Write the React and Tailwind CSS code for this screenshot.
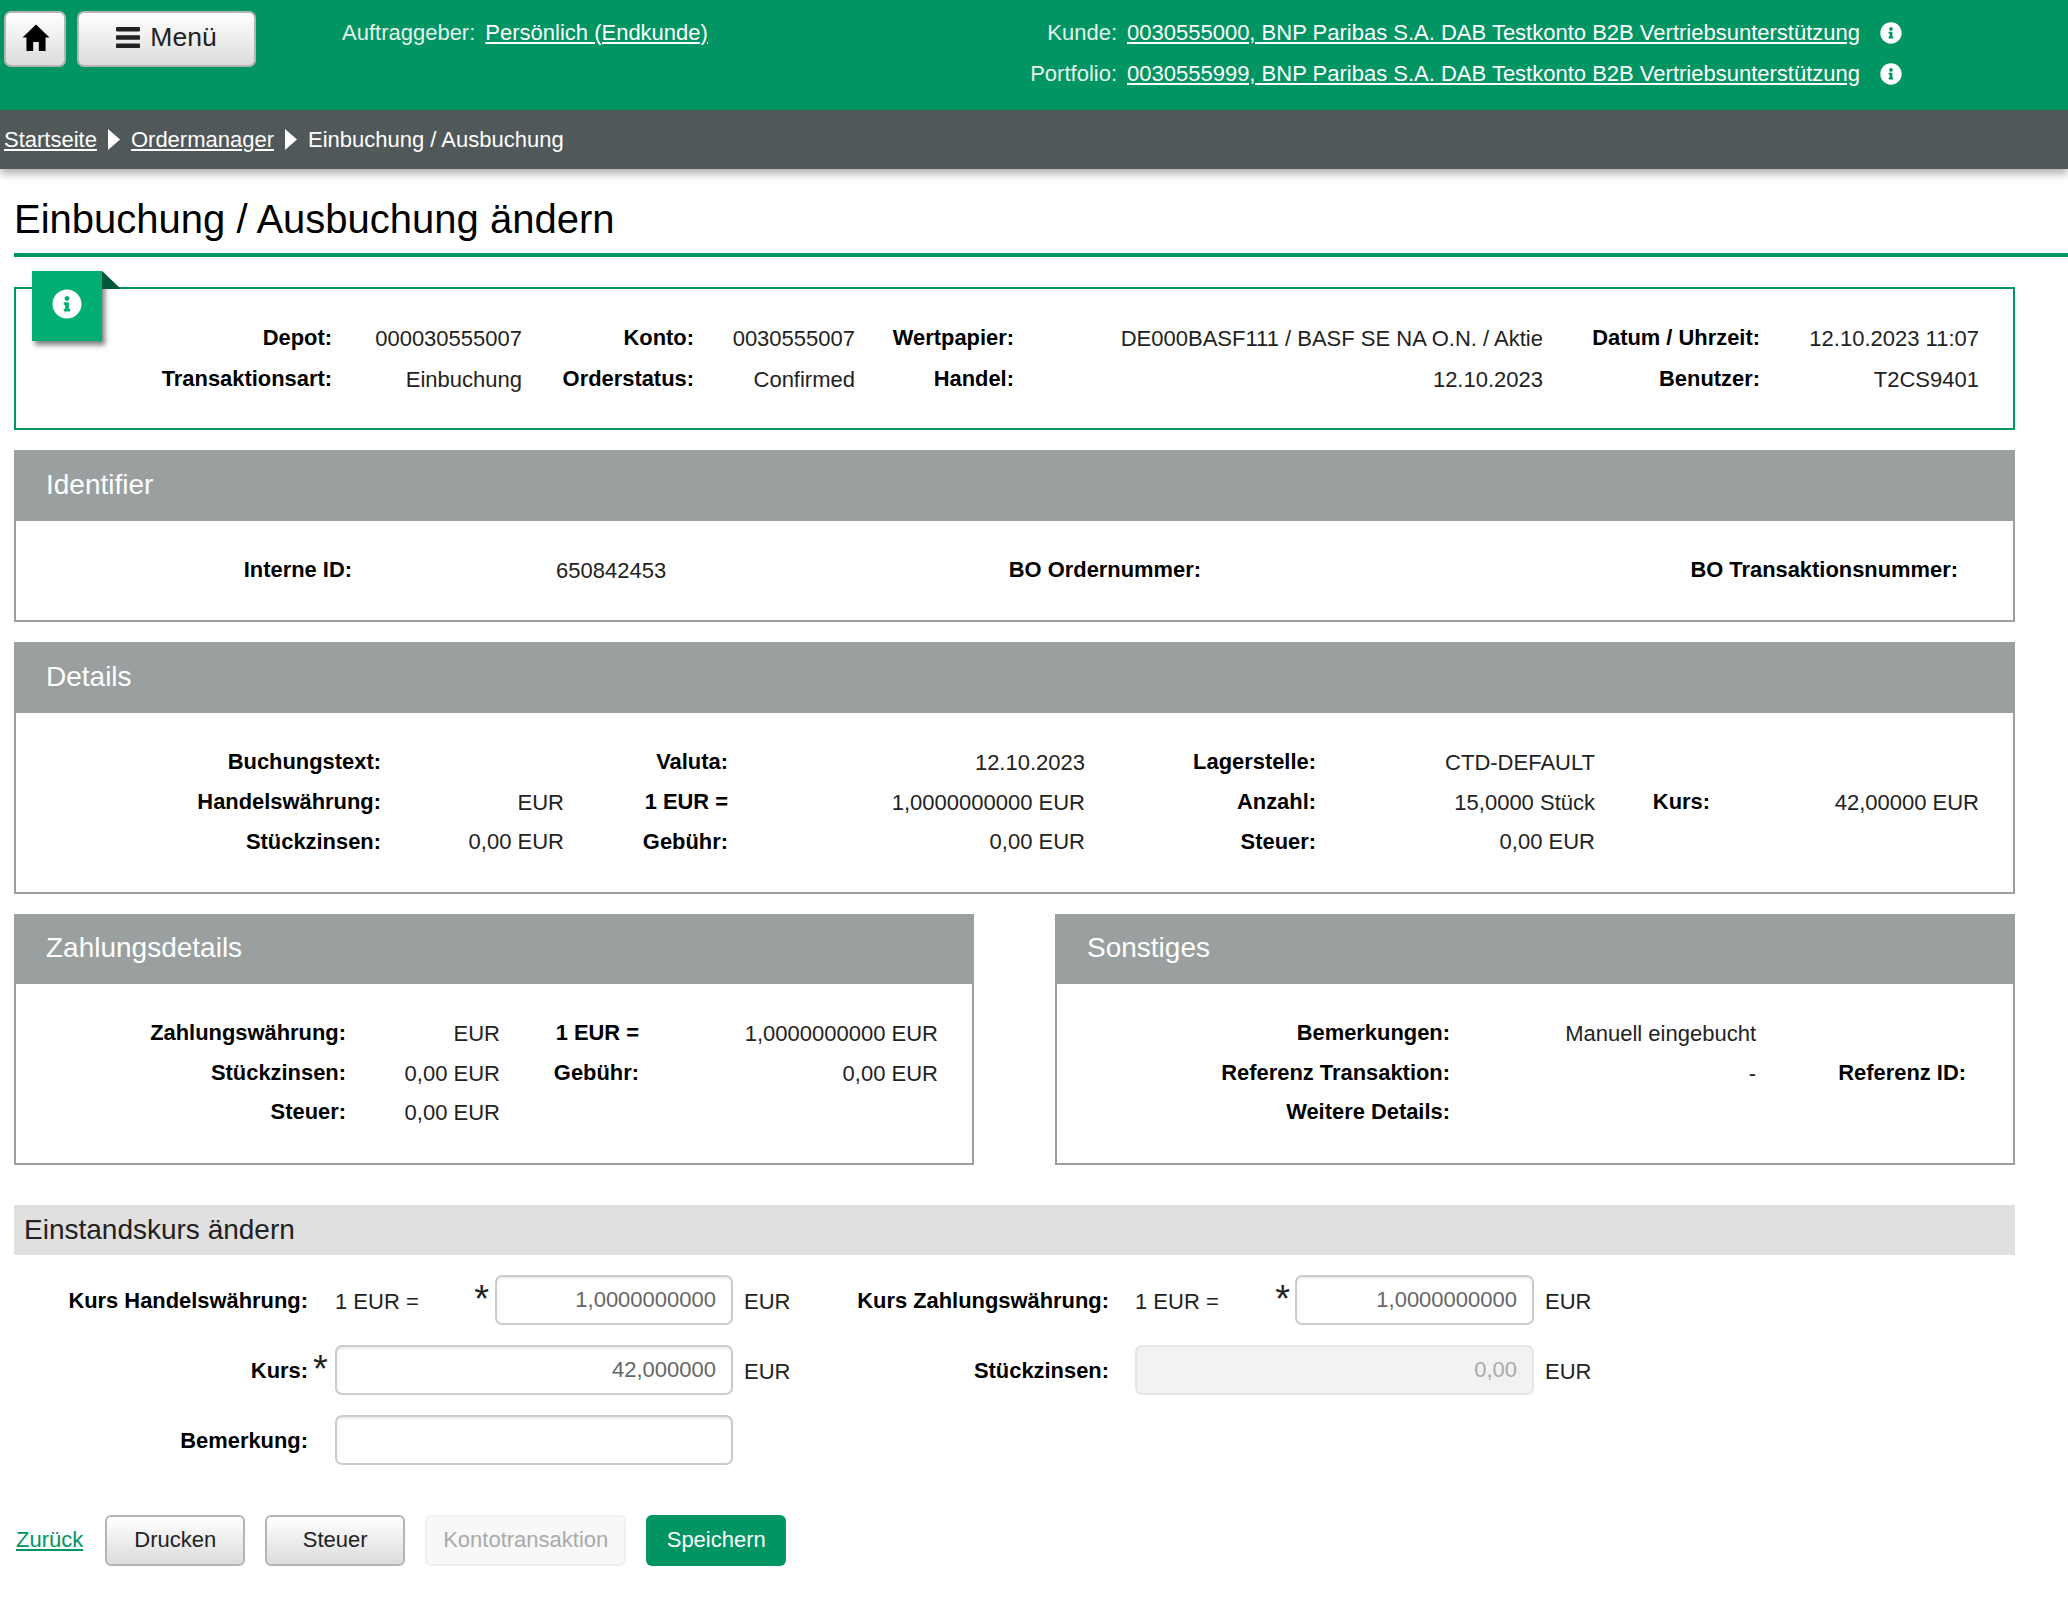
import { FaInfoCircle } from 'react-icons/fa'

const L = ({ children, className = '' }) => (
  <div className={`text-right text-[21.9px] font-bold text-black ${className}`}>{children}</div>
)
const V = ({ children, className = '' }) => (
  <div className={`text-right text-[#222] ${className}`}>{children}</div>
)

function Panel({ title, children, gridClass, headClass = 'h-[70px]' }) {
  return (
    <section className="border-2 border-[#9aa09f] bg-white">
      <h2 className={`flex -mt-px items-center bg-[#9aa09f] px-[30px] pb-[2px] text-[28px] font-normal text-white ${headClass}`}>{title}</h2>
      <div className={`grid items-center ${gridClass}`}>{children}</div>
    </section>
  )
}

function HomeIcon() {
  return (
    <svg width="28" height="27" viewBox="0 0 24 24" fill="currentColor" aria-hidden="true">
      <path d="M12 0.5L24 12H20.5V24H14.5V16H9.5V24H3.5V12H0Z" />
    </svg>
  )
}

function BarsIcon() {
  return (
    <svg width="24" height="21" viewBox="0 0 24 21" fill="currentColor" aria-hidden="true">
      <rect x="0" y="0" width="24" height="4.4" rx="0.8" />
      <rect x="0" y="8.3" width="24" height="4.4" rx="0.8" />
      <rect x="0" y="16.6" width="24" height="4.4" rx="0.8" />
    </svg>
  )
}

function Caret() {
  return (
    <svg width="12" height="21" viewBox="0 0 12 20" fill="#fff" preserveAspectRatio="none" className="mx-[11px] shrink-0" aria-hidden="true">
      <path d="M0 0L12 10L0 20Z" />
    </svg>
  )
}

function Input({ value, disabled, className = '' }) {
  return (
    <div
      className={`flex h-[50px] items-center justify-end rounded-[7px] border-2 px-[15px] ${
        disabled
          ? 'border-[#e6e6e6] bg-[#f2f2f2] text-[#aaa]'
          : 'border-[#cccccc] bg-white text-[#666] shadow-[inset_0_2px_2px_rgba(0,0,0,0.08)]'
      } ${className}`}
    >
      {value}
    </div>
  )
}

const Star = () => <span className="self-start pt-[5px] text-[38px] leading-none text-[#222]">*</span>

function GrayButton({ children, className = '' }) {
  return (
    <button className={`flex h-[51px] items-center justify-center rounded-[6px] border-2 border-[#b5b5b5] bg-gradient-to-b from-white to-[#dcdcdc] pb-[1px] text-[#222] ${className}`}>
      {children}
    </button>
  )
}

export default function App() {
  return (
    <div className="min-h-[1614px] bg-white font-['Liberation_Sans',Arial,sans-serif] text-[22px] text-black">
      <header className="flex h-[110px] items-start justify-between bg-[#009563]">
        <div className="flex items-start">
          <div className="flex w-[342px] gap-[11px] pl-[4px] pt-[11px]">
            <button className="flex h-[56px] w-[62px] items-center justify-center rounded-[7px] border-2 border-[#b5b5b5] bg-gradient-to-b from-white to-[#dcdcdc] pb-[4px] pl-[2px] text-black">
              <HomeIcon />
            </button>
            <button className="flex h-[56px] w-[179px] items-center justify-center gap-[10px] rounded-[7px] border-2 border-[#b5b5b5] bg-gradient-to-b from-white to-[#dcdcdc] pb-[3px] text-[26.5px] text-[#222]">
              <BarsIcon />
              Menü
            </button>
          </div>
          <div className="flex h-[40px] items-center gap-[10px] pt-[24px] text-white">
            <span className="text-[#e4f3ec]">Auftraggeber:</span>
            <a href="#" className="underline">Persönlich (Endkunde)</a>
          </div>
        </div>
        <div className="mr-[166px] grid grid-cols-[auto_auto_32px] items-center gap-x-[10px] pt-[12px] text-white">
          <span className="h-[41px] text-right leading-[41px] text-[#e4f3ec]">Kunde:</span>
          <a href="#" className="underline">0030555000, BNP Paribas S.A. DAB Testkonto B2B Vertriebsunterstützung</a>
          <FaInfoCircle className="ml-[10px] text-[22px]" />
          <span className="h-[41px] text-right leading-[41px] text-[#e4f3ec]">Portfolio:</span>
          <a href="#" className="underline">0030555999, BNP Paribas S.A. DAB Testkonto B2B Vertriebsunterstützung</a>
          <FaInfoCircle className="ml-[10px] text-[22px]" />
        </div>
      </header>

      <nav className="flex h-[59px] items-center bg-[#50585a] pl-[4px] text-white shadow-[0_5px_8px_rgba(0,0,0,0.3)]">
        <a href="#" className="underline">Startseite</a>
        <Caret />
        <a href="#" className="underline">Ordermanager</a>
        <Caret />
        <span>Einbuchung / Ausbuchung</span>
      </nav>

      <main className="pl-[14px]">
        <h1 className="flex h-[84px] items-center pt-[16px] text-[40px] font-normal text-black">Einbuchung / Ausbuchung ändern</h1>
        <div className="h-[4px] bg-[#009563]" />

        <div className="w-[2001px] pb-[40px]">
          <section className="relative mt-[30px] h-[143px] border-2 border-[#009563] bg-white pl-[1px] pt-[29.5px]">
            <div className="absolute -top-[18px] left-[16px] flex h-[70px] w-[70px] justify-center bg-[#00ae72] pt-[18px] text-white shadow-[3px_4px_5px_rgba(0,0,0,0.5)]">
              <FaInfoCircle className="text-[30px]" />
            </div>
            <div className="absolute -top-[18px] left-[86px] h-0 w-0 border-b-[18px] border-r-[19px] border-b-[#00563a] border-r-transparent" />
            <div className="grid grid-cols-[315px_190px_172px_161px_159px_529px_217px_219px] auto-rows-[40.5px] items-center">
              <L>Depot:</L><V>000030555007</V><L>Konto:</L><V>0030555007</V><L>Wertpapier:</L><V>DE000BASF111 / BASF SE NA O.N. / Aktie</V><L>Datum / Uhrzeit:</L><V>12.10.2023 11:07</V>
              <L>Transaktionsart:</L><V>Einbuchung</V><L>Orderstatus:</L><V>Confirmed</V><L>Handel:</L><V>12.10.2023</V><L>Benutzer:</L><V>T2CS9401</V>
            </div>
          </section>

          <div className="mt-[20px]">
            <Panel title="Identifier" gridClass="grid-cols-[336px_400px_449px_757px] auto-rows-[40px] pb-[29.5px] pt-[29.5px]">
              <L>Interne ID:</L>
              <div className="pl-[204px] text-[#222]">650842453</div>
              <L>BO Ordernummer:</L>
              <L>BO Transaktionsnummer:</L>
            </Panel>
          </div>

          <div className="mt-[20px]">
            <Panel title="Details" gridClass="grid-cols-[365px_183px_164px_357px_231px_279px_115px_269px] auto-rows-[39.6px] pb-[30px] pt-[30px]">
              <L>Buchungstext:</L><V></V><L>Valuta:</L><V>12.10.2023</V><L>Lagerstelle:</L><V>CTD-DEFAULT</V><L></L><V></V>
              <L>Handelswährung:</L><V>EUR</V><L>1 EUR =</L><V>1,0000000000 EUR</V><L>Anzahl:</L><V>15,0000 Stück</V><L>Kurs:</L><V>42,00000 EUR</V>
              <L>Stückzinsen:</L><V>0,00 EUR</V><L>Gebühr:</L><V>0,00 EUR</V><L>Steuer:</L><V>0,00 EUR</V><L></L><V></V>
            </Panel>
          </div>

          <div className="mt-[20px] grid grid-cols-[960px_1fr] gap-x-[81px]">
            <Panel title="Zahlungsdetails" headClass="h-[69px]" gridClass="grid-cols-[330px_154px_139px_299px] auto-rows-[39.6px] pb-[30px] pt-[30px]">
              <L>Zahlungswährung:</L><V>EUR</V><L>1 EUR =</L><V>1,0000000000 EUR</V>
              <L>Stückzinsen:</L><V>0,00 EUR</V><L>Gebühr:</L><V>0,00 EUR</V>
              <L>Steuer:</L><V>0,00 EUR</V><L></L><V></V>
            </Panel>
            <Panel title="Sonstiges" headClass="h-[69px]" gridClass="grid-cols-[393px_306px_210px] auto-rows-[39.6px] pb-[30px] pt-[30px]">
              <L>Bemerkungen:</L><V>Manuell eingebucht</V><L></L>
              <L>Referenz Transaktion:</L><V>-</V><L>Referenz ID:</L>
              <L>Weitere Details:</L><V></V><L></L>
            </Panel>
          </div>
        </div>

        <div className="w-[2001px]">
          <div className="flex h-[50px] items-center bg-[#e0e0e0] pl-[10px] text-[28px] text-[#222]">Einstandskurs ändern</div>

          <div className="mt-[20px] grid grid-cols-[294px_27px_398px_67px_309px_26px_399px_auto] auto-rows-[50px] items-center gap-y-[20px]">
            <L className="pt-[3px]">Kurs Handelswährung:</L>
            <div />
            <div className="flex items-center">
              <span className="flex-1 pt-[3px] text-[#222]">1 EUR =</span>
              <Star />
              <Input value="1,0000000000" className="ml-[6px] w-[238px]" />
            </div>
            <div className="pl-[11px] pt-[3px] text-[#222]">EUR</div>
            <L className="pt-[3px]">Kurs Zahlungswährung:</L>
            <div />
            <div className="flex items-center">
              <span className="flex-1 pt-[3px] text-[#222]">1 EUR =</span>
              <Star />
              <Input value="1,0000000000" className="ml-[5px] w-[239px]" />
            </div>
            <div className="pl-[11px] pt-[3px] text-[#222]">EUR</div>

            <L className="pt-[3px]">Kurs:</L>
            <div className="flex h-full pl-[5px]"><Star /></div>
            <Input value="42,000000" />
            <div className="pl-[11px] pt-[3px] text-[#222]">EUR</div>
            <L className="pt-[3px]">Stückzinsen:</L>
            <div />
            <Input value="0,00" disabled />
            <div className="pl-[11px] pt-[3px] text-[#222]">EUR</div>

            <L className="pt-[3px]">Bemerkung:</L>
            <div />
            <Input value="" />
          </div>

          <div className="mt-[50px] flex items-center">
            <a href="#" className="ml-[2px] mr-[22px] pb-[1px] text-[#009563] underline">Zurück</a>
            <GrayButton className="w-[140px]">Drucken</GrayButton>
            <GrayButton className="ml-[20px] w-[140px]">Steuer</GrayButton>
            <div className="ml-[20px] flex h-[51px] w-[201px] items-center justify-center rounded-[6px] border-2 border-[#f0f0f0] bg-[#f8f8f8] pb-[1px] text-[#aaa]">Kontotransaktion</div>
            <div className="ml-[20px] flex h-[51px] w-[140px] items-center justify-center rounded-[6px] bg-[#009563] pb-[1px] text-white">Speichern</div>
          </div>
        </div>
      </main>
    </div>
  )
}
